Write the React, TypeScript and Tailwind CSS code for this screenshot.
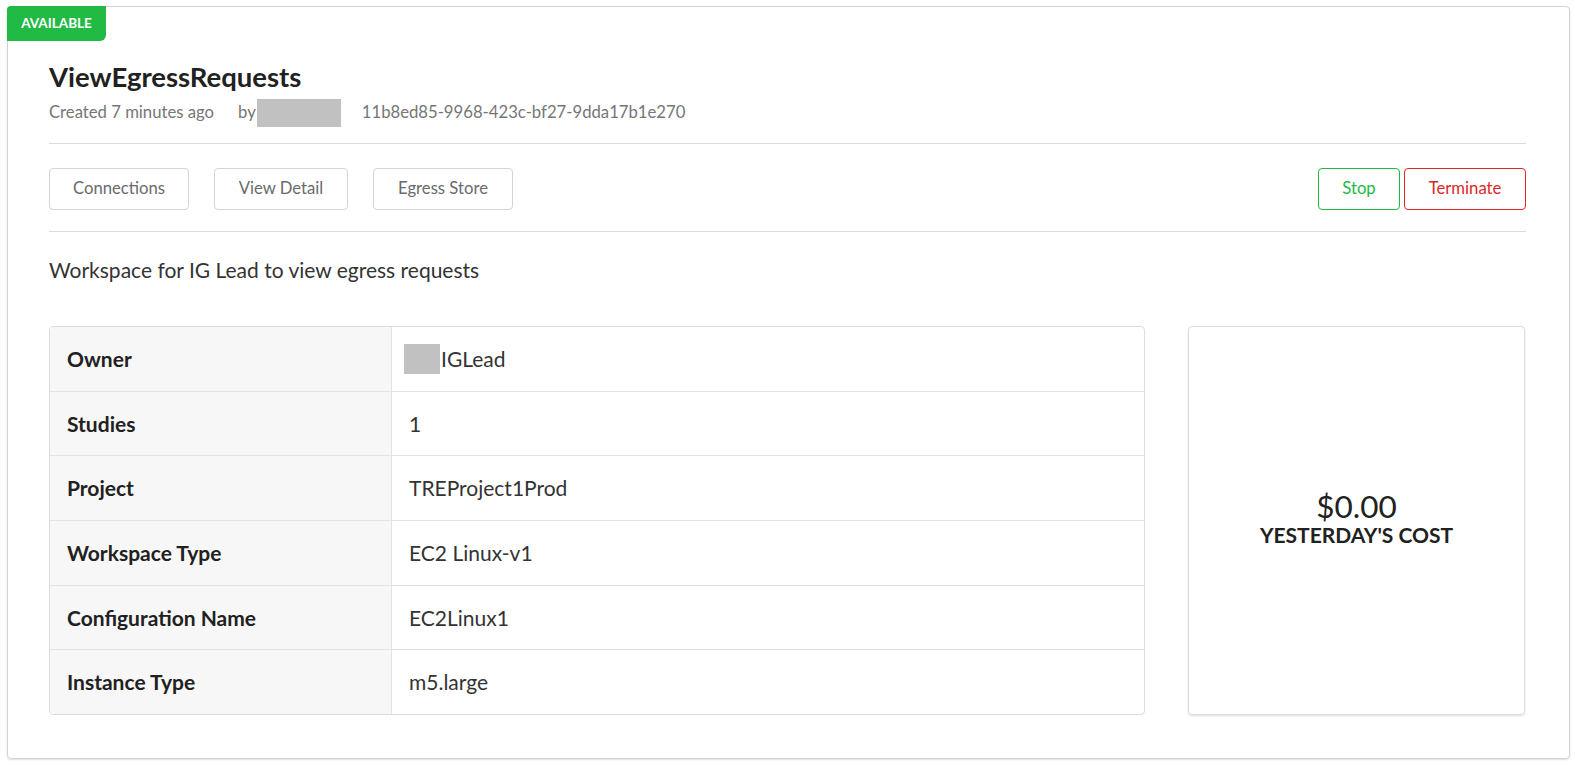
import React from "react";

const ROWS: { label: string; value: React.ReactNode }[] = [
  {
    label: "Owner",
    value: (
      <span className="flex items-center">
        <span className="inline-block w-[36px] h-[30px] bg-[#c1c1c1] -ml-[5px] mr-[1px]" />
        <span>IGLead</span>
      </span>
    ),
  },
  { label: "Studies", value: "1" },
  { label: "Project", value: "TREProject1Prod" },
  { label: "Workspace Type", value: "EC2 Linux-v1" },
  { label: "Configuration Name", value: "EC2Linux1" },
  { label: "Instance Type", value: "m5.large" },
];

const App: React.FC = () => {
  return (
    <div className="min-h-[766px] bg-white pt-[6px] pl-[7px] font-['Lato','Liberation_Sans',sans-serif] text-[#212121]">
      <div className="relative w-[1563px] h-[753px] rounded-[4px] border border-[#d4d4d5] shadow-[0_1px_2px_rgba(34,36,38,0.15)] pl-[41px] pr-[43px] pt-[53px]">
        <div className="absolute -top-px -left-px h-[35px] w-[99px] rounded-tl-[4px] rounded-br-[6px] bg-[#21ba45] text-white text-[13.5px] font-bold flex items-center justify-center">
          AVAILABLE
        </div>

        <h1 className="text-[27.5px] leading-[34px] font-bold">ViewEgressRequests</h1>
        <div className="flex items-center h-[28px] mt-[5px] text-[16.7px] text-[#767676]">
          <span>Created 7 minutes ago</span>
          <span className="ml-[24px]">by</span>
          <span className="inline-block w-[84px] h-[28px] bg-[#c1c1c1] ml-[1px]" />
          <span className="ml-[21px]">11b8ed85-9968-423c-bf27-9dda17b1e270</span>
        </div>

        <div className="mt-[16px] border-t border-[#dcdcdc]" />

        <div className="flex items-start justify-between h-[87px] pt-[24px]">
          <div className="flex gap-[25px]">
            <button className="h-[42px] w-[140px] rounded-[4px] border border-[#d4d4d5] text-[16.7px] text-[#6b6b6b]">
              Connections
            </button>
            <button className="h-[42px] w-[134px] rounded-[4px] border border-[#d4d4d5] text-[16.7px] text-[#6b6b6b]">
              View Detail
            </button>
            <button className="h-[42px] w-[140px] rounded-[4px] border border-[#d4d4d5] text-[16.7px] text-[#6b6b6b]">
              Egress Store
            </button>
          </div>
          <div className="flex gap-[4px]">
            <button className="h-[42px] w-[82px] rounded-[4px] border border-[#21ba45] text-[16.7px] text-[#21ba45]">
              Stop
            </button>
            <button className="h-[42px] w-[122px] rounded-[4px] border border-[#db2828] text-[16.7px] text-[#db2828]">
              Terminate
            </button>
          </div>
        </div>

        <div className="border-t border-[#dcdcdc]" />

        <p className="mt-[24px] text-[21px] leading-[28px] text-[#333]">
          Workspace for IG Lead to view egress requests
        </p>

        <div className="mt-[42px] flex gap-[43px]">
          <div className="w-[1096px] h-[389px] rounded-[4px] border border-[#dcdcdd] overflow-hidden flex flex-col">
            {ROWS.map((row, i) => (
              <div
                key={row.label}
                className={`flex flex-1 text-[21px] ${i > 0 ? "border-t border-[#e3e3e3]" : ""}`}
              >
                <div className="w-[342px] bg-[#f7f7f7] border-r border-[#e3e3e3] flex items-center pl-[17px] font-bold">
                  {row.label}
                </div>
                <div className="flex-1 flex items-center pl-[17px] text-[#333]">{row.value}</div>
              </div>
            ))}
          </div>

          <div className="w-[337px] h-[389px] rounded-[4px] border border-[#dcdcdd] shadow-[0_1px_2px_rgba(34,36,38,0.15)] flex flex-col items-center justify-center pb-[6px]">
            <div className="text-[31.5px] leading-[34px] text-[#212121]">$0.00</div>
            <div className="text-[21px] leading-[24px] font-bold uppercase">Yesterday's Cost</div>
          </div>
        </div>
      </div>
    </div>
  );
};

export default App;
